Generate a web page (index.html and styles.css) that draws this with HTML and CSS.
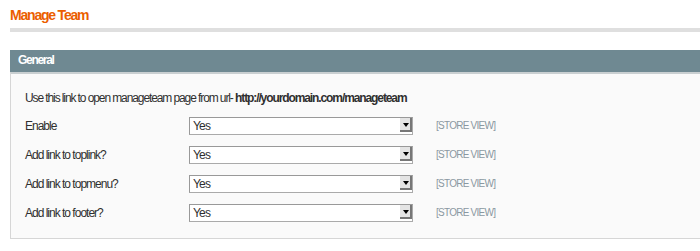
FILE: index.html
```html
<!DOCTYPE html>
<html lang="en">
<head>
    <meta charset="UTF-8">
    <title>Manage Team</title>
    <link rel="stylesheet" href="styles.css">
</head>
<body>
    <div class="content-header">
        <h3>Manage Team</h3>
    </div>

    <div class="section">
        <div class="entry-edit-head">General</div>
        <div class="fieldset">
            <p class="note">Use this link to open manageteam page from url- <strong>http://yourdomain.com/manageteam</strong></p>
            <table class="form-list">
                <tr>
                    <td class="label">Enable</td>
                    <td class="value">
                        <div class="select-box">
                            <select><option>Yes</option><option>No</option></select>
                            <span class="arrow"></span>
                        </div>
                    </td>
                    <td class="scope">[STORE VIEW]</td>
                </tr>
                <tr>
                    <td class="label">Add link to toplink?</td>
                    <td class="value">
                        <div class="select-box">
                            <select><option>Yes</option><option>No</option></select>
                            <span class="arrow"></span>
                        </div>
                    </td>
                    <td class="scope">[STORE VIEW]</td>
                </tr>
                <tr>
                    <td class="label">Add link to topmenu?</td>
                    <td class="value">
                        <div class="select-box">
                            <select><option>Yes</option><option>No</option></select>
                            <span class="arrow"></span>
                        </div>
                    </td>
                    <td class="scope">[STORE VIEW]</td>
                </tr>
                <tr>
                    <td class="label">Add link to footer?</td>
                    <td class="value">
                        <div class="select-box">
                            <select><option>Yes</option><option>No</option></select>
                            <span class="arrow"></span>
                        </div>
                    </td>
                    <td class="scope">[STORE VIEW]</td>
                </tr>
            </table>
        </div>
    </div>
</body>
</html>
```

FILE: styles.css
```css
body {
    font-family: "Liberation Sans", Arial, sans-serif;
    font-size: 12px;
    color: #2f2f2f;
    background: #fff;
    margin: 0;
    padding: 0 0 0 10px;
}
.content-header {
    border-bottom: 4px solid #dfdfdf;
    padding: 8px 0 5px;
    margin-bottom: 18px;
}
.content-header h3 {
    margin: 0;
    color: #eb5e00;
    font-size: 14px;
    line-height: 15px;
    font-weight: bold;
    letter-spacing: -1.2px;
}
.entry-edit-head {
    background: #6f8992;
    color: #fff;
    font-weight: bold;
    font-size: 12px;
    height: 22px;
    line-height: 21px;
    padding: 0 8px;
    letter-spacing: -1.3px;
}
.fieldset {
    background: #fafafa;
    border: 1px solid #d6d6d6;
    border-right: 0;
    border-top: 2px solid #c9cfd1;
    padding: 17px 0 14px 14px;
    height: 133px;
}
.note {
    margin: 0 0 6px;
    line-height: 14px;
    letter-spacing: -1.1px;
}
.form-list {
    border-collapse: collapse;
}
.form-list td {
    padding: 0;
    height: 29px;
    vertical-align: middle;
}
.label {
    width: 164px;
    letter-spacing: -1px;
}
.value {
    width: 247px;
}
.select-box {
    position: relative;
    width: 224px;
    height: 18px;
}
.select-box select {
    appearance: none;
    -webkit-appearance: none;
    width: 224px;
    height: 18px;
    margin: 0;
    padding: 0 0 0 3px;
    border: 1px solid #aaa;
    border-top-color: #999;
    border-left-color: #999;
    background: #fff;
    font-family: "Liberation Sans", Arial, sans-serif;
    font-size: 12px;
    color: #2f2f2f;
    letter-spacing: -0.8px;
    border-radius: 0;
}
.arrow {
    position: absolute;
    right: 1px;
    top: 1px;
    width: 12px;
    height: 14px;
    background: #e4e4e4;
    border-right: 2px solid #777;
    border-bottom: 2px solid #777;
    box-sizing: border-box;
    pointer-events: none;
}
.arrow::after {
    content: "";
    position: absolute;
    left: 3px;
    top: 5px;
    border-left: 3px solid transparent;
    border-right: 3px solid transparent;
    border-top: 4px solid #000;
}
.scope {
    color: #8a98a1;
    font-size: 10px;
    letter-spacing: -0.75px;
}
```
